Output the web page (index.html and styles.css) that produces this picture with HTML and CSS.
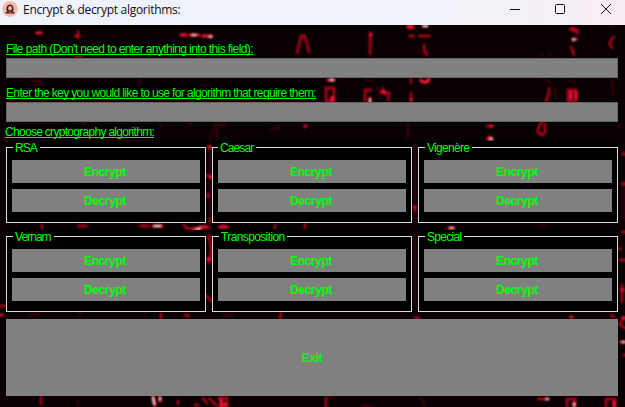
FILE: index.html
```html
<!DOCTYPE html>
<html lang="en">
<head>
<meta charset="utf-8">
<title>Encrypt &amp; decrypt algorithms:</title>
<link rel="stylesheet" href="styles.css">
</head>
<body>
<header class="titlebar">
  <svg class="app-icon" width="16" height="17" viewBox="0 0 16 17"><circle cx="8" cy="9" r="7.900" fill="#f8b8ab"/><path d="M3.500 13.500v-1.500h1.800C3.600 9.400 4.300 4.500 8 4.500s4.400 4.900 2.700 7.500h1.800v1.500z" fill="#4a2023"/><ellipse cx="8" cy="8.300" rx="1.800" ry="2.300" fill="#efb0a5"/><path d="M6 12.500l2-1.200 2 1.200z" fill="#c28780"/></svg>
  <h1 class="title">Encrypt &amp; decrypt algorithms:</h1>
  <svg class="controls" width="110" height="17" viewBox="0 0 110 17" fill="none" stroke="#111" stroke-width="1"><path d="M3 9.500h10"/><rect x="48.500" y="4.500" width="9" height="9" rx="1"/><path d="M94 4l10 10M104 4L94 14"/></svg>
</header>
<main class="client">
  <svg class="backdrop" viewBox="0 25 625 382" width="625" height="382">
    <defs><filter id="soft" x="-5%" y="-5%" width="110%" height="110%"><feGaussianBlur stdDeviation=".9"/></filter></defs>
    <g filter="url(#soft)" fill="none" stroke-linecap="round">
      <path class="dim" d="M32 81h9v4h-8M36 99h3M140 79v6M142 99h4M180 86v14M197 56h5M161 124v3M83 123h3M190 122v3M200 86h12M206 97h6M210 138l5-13h10M217 128v12M271 129h7M278 125v4M542 54v2M548 54l3 2M545 79l6 4M569 80l7 3M611 27h2M612 79l1 16M618 127h3M555 88v10M408 118v20M366 79l7 3M378 88l2 10M419 51l5 3M210 145v115M221 227l5-5M138 225h8M541 226h5M29 315h3M79 314h3M145 313v3M187 314l-5 2M78 401v4M233 315h-10M326 397h9M362 406h10M624 180v40M618 236v9M568 317h3M420 397l5 9M540 136h3M410 206h5M30 314h10M415 145v75M415 235v70"/>
      <path class="mid" d="M75 36h5M78 31v7M75 56h7M297 53l4-17h4l4 16M370 33v21M419 36h11M424 45v4l3 6M572 28l6 2M570 29l8 4M571 47l3 8M614 37c-5 3-5 8-2 11M326 88h8v13h-8zM371 90h-6v11M383 88v5h6l-1 7M549 88v5l-3 8M568 90h8v11h-8zM542 122c-8 10-3 14 3 11v-9M411 79v4M411 93v7M408 28h6M409 36h5M491 126h-4M491 137h-3M42 225v3M78 226h9M141 226h8M184 225l3 4h8M208 147h4M207 175l5 3M208 194v3M210 219v2M208 236l4 12-3 15M275 225v3M305 224v4M207 296l4 5M281 313l-1 6M0 306h5M41 397v7M185 315l4 1M161 314v5M178 401v3M195 405h3M203 398l4 5M326 398v9M567 407v-8h8v8M606 407v-8h9v8M611 315l3 2M622 232h4M619 249h2M620 260h5M622 154h5M622 184h5M622 285v17M623 317l-3 8 5 3M620 342h7M624 355h3M209 398l7 7M218 398h9v9h-9M415 207v4M415 318h4M538 399h7"/>
      <path class="hot" d="M37 33h4M181 35h5M190 35h9M203 36h9M408 26h4M423 26h4M573 39h3M371 34v1M328 80h6M332 97v3M370 98v5M382 92h3M421 80c0 3 7 3 8-1M411 99v1M571 98v-6M576 92v6M491 126h1M153 226h9M193 229h8M200 227h7M220 227h7M210 177h2M209 147h1M488 139h4M449 228h5M153 397l2 8M160 397v4M221 400v5M224 404h2M305 126h1M571 317h1M546 399h2M574 403v3M614 402v4M622 290h1M623 318h2M622 342h2M1 315h1M208 259h2M415 207h0"/>
      <path class="white" d="M193 35h2M210 37h1M424 26h3M573 40h1M331 80h2M370 100v1M155 226h5M197 229h2M451 228h1M153 398l1 6M160 398v1M623 342h1M491 139h1M547 399h1M574 404v1"/>
    </g>
  </svg>
  <div class="form">
    <label class="label path" for="path">File path (Don't need to enter anything into this field):</label>
    <input class="field" id="path">
    <label class="label key" for="key">Enter the key you would like to use for algorithm that require them:</label>
    <input class="field" id="key">
    <div class="label choose">Choose cryptography algorithm:</div>
    <div class="groups">
      <section class="group"><h2 class="rsa">RSA</h2><button>Encrypt</button><button>Decrypt</button></section>
      <section class="group"><h2 class="caesar">Caesar</h2><button>Encrypt</button><button>Decrypt</button></section>
      <section class="group"><h2 class="vigenere">Vigenère</h2><button>Encrypt</button><button>Decrypt</button></section>
      <section class="group"><h2 class="vernam">Vernam</h2><button>Encrypt</button><button>Decrypt</button></section>
      <section class="group"><h2 class="transposition">Transposition</h2><button>Encrypt</button><button>Decrypt</button></section>
      <section class="group"><h2 class="special">Special</h2><button>Encrypt</button><button>Decrypt</button></section>
    </div>
    <button class="exit">Exit</button>
  </div>
</main>
</body>
</html>
```
FILE: styles.css
```css
* { box-sizing: border-box; }
body { margin: 0; width: 625px; height: 407px; overflow: hidden; background: #080002; font: 12px/14px "Liberation Sans", sans-serif; color: #0f0; }
.titlebar { display: flex; align-items: flex-start; height: 25px; padding: 0 8px 0 2px; background: linear-gradient(90deg, #eef3fb 0%, #eff3f9 65%, #f8edf6 100%); color: #111; }
.title { margin: 1px auto 0 5px; font: 12px/18px "Open Sans", "Noto Sans", sans-serif; white-space: nowrap; letter-spacing: -.29px; }
.app-icon, .controls { flex: none; }
.client { position: relative; height: 382px; overflow: hidden; }
.backdrop { position: absolute; inset: 0; }
.dim { stroke: #65000d; stroke-width: 1.8; opacity: .65; }
.mid { stroke: #c0001a; stroke-width: 2.3; }
.hot { stroke: #ff1738; stroke-width: 3.2; }
.white { stroke: #ffe0e0; stroke-width: 2; }
.form { position: relative; display: flex; flex-direction: column; align-items: flex-start; padding: 17px 7px 0 6px; }
.label { display: block; height: 14px; background: #000; white-space: nowrap; text-decoration: underline; text-underline-offset: 1px; text-decoration-thickness: 1px; text-decoration-skip-ink: none; }
.path { width: 251px; letter-spacing: -.6px; }
.key { width: 315px; letter-spacing: -.63px; }
.choose { width: 153px; margin-left: -1px; letter-spacing: -.7px; }
.field { width: 612px; height: 20px; margin: 2px 0 8px; padding: 0 3px; border: 1px solid #646464; border-radius: 0; outline: 0; background: #808080; color: #0f0; }
#key { margin-bottom: 3px; }
.groups { display: grid; grid-template-columns: repeat(3, 200px); gap: 7px 6px; margin-top: 2px; }
.group { display: flex; flex-direction: column; gap: 6px; height: 82px; padding: 0 6px; background: linear-gradient(#dcdcdc, #dcdcdc) 0 6px / 100% 1px no-repeat, linear-gradient(#dcdcdc, #dcdcdc) 0 100% / 100% 1px no-repeat, linear-gradient(#dcdcdc, #dcdcdc) 0 100% / 1px 76px no-repeat, linear-gradient(#dcdcdc, #dcdcdc) 100% 100% / 1px 76px no-repeat, #000; }
.group h2 { align-self: flex-start; height: 13px; margin: 0 0 0 1px; padding: 0 3px 0 2px; background: #000; font: 12px/14px "Liberation Sans", sans-serif; letter-spacing: -.7px; white-space: nowrap; }
.group .rsa { letter-spacing: -.9px; }
.group .caesar { margin-left: 0; letter-spacing: -.9px; }
.group .vernam { letter-spacing: -.95px; }
.group .transposition { padding-right: 2px; letter-spacing: -.62px; }
.group button, .exit { flex: none; padding: 0 2px 0 0; border: 0; border-radius: 0; background: #808080; color: #0f0; font: bold 12px/14px "Liberation Sans", sans-serif; letter-spacing: -.4px; }
.group button { height: 23px; }
.exit { width: 612px; height: 77px; margin-top: 7px; padding: 0; }
```
